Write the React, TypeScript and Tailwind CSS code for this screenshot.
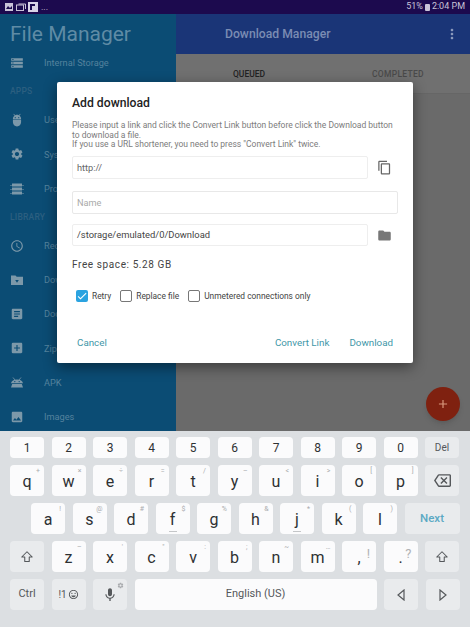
import { ReactNode } from 'react'
import {
  MdStorage,
  MdAdb,
  MdSettings,
  MdAccessTime,
  MdFolder,
  MdArticle,
  MdAddBox,
  MdImage,
  MdContentCopy,
  MdMoreVert,
  MdAdd,
  MdCheck,
  MdOutlineBackspace,
  MdMic,
  MdOutlineEmojiEmotions,
} from 'react-icons/md'
import { LuArrowBigUp } from 'react-icons/lu'

const ProcessIcon = () => (
  <svg width="14" height="14" viewBox="0 0 14 14" fill="currentColor">
    <rect x="2" y="1.5" width="10" height="3" />
    <rect x="2" y="5.5" width="10" height="3" />
    <rect x="2" y="9.5" width="10" height="3" />
    <rect x="0.5" y="3" width="1" height="1" />
    <rect x="12.5" y="3" width="1" height="1" />
    <rect x="0.5" y="7" width="1" height="1" />
    <rect x="12.5" y="7" width="1" height="1" />
    <rect x="0.5" y="11" width="1" height="1" />
    <rect x="12.5" y="11" width="1" height="1" />
  </svg>
)

const DownloadFolderIcon = () => (
  <svg width="14" height="14" viewBox="0 0 14 14">
    <path fill="currentColor" d="M1 2.5h4.5l1.2 1.2H13v8.3H1z" />
    <path fill="#0b4c74" d="M7 5v2H5.2L7 9.800 8.800 7H7z" />
  </svg>
)

const ApkIcon = () => (
  <svg width="14" height="14" viewBox="0 0 14 14" fill="currentColor">
    <path d="M1 7.200C1.300 4.800 3.800 3.400 7 3.400s5.700 1.400 6 3.800z" />
    <path d="M2.200 8h9.600l1.200 3.500H1z" />
    <path d="M3 1.500l2 2.500M11 1.500l-2 2.500" stroke="currentColor" strokeWidth="0.8" />
    <circle cx="4.800" cy="5.600" r="0.7" fill="#0b4c74" />
    <circle cx="9.200" cy="5.600" r="0.7" fill="#0b4c74" />
  </svg>
)

const Section = ({ label }: { label: string }) => (
  <div className="h-[23px] flex items-center pl-[10px] text-[8.5px] font-medium tracking-wide text-[#2b5f80]">{label}</div>
)

const DrawerItem = ({ icon, label }: { icon: ReactNode; label: string }) => (
  <div className="h-[34.2px] flex items-center text-[9.2px] text-[#54829d]">
    <div className="w-[44px] pl-[10px] text-[#7c98a9]">{icon}</div>
    <span>{label}</span>
  </div>
)

const Key = ({
  main,
  sub,
  bigSub,
  tick,
  className = '',
}: {
  main: string
  sub?: string
  bigSub?: boolean
  tick?: boolean
  className?: string
}) => (
  <div className={`relative w-[34px] h-[31px] rounded-[4px] bg-[#fbfbfc] flex items-center justify-center text-[16px] text-[#2e3133] pt-[2px] ${className}`}>
    {main}
    {sub && (
      <span className={bigSub ? 'absolute right-[6px] top-[3px] text-[13px] text-[#b0b2b5]' : 'absolute right-[4px] top-[1px] text-[7px] text-[#a9abae]'}>
        {sub}
      </span>
    )}
    {tick && <span className="absolute bottom-[2px] left-[13px] w-[8px] h-px bg-[#c4c6c8]" />}
  </div>
)

const FnKey = ({ children, className = '' }: { children: ReactNode; className?: string }) => (
  <div className={`relative w-[34px] h-[31px] rounded-[4px] bg-[#e9ebed] flex items-center justify-center text-[#55585b] ${className}`}>{children}</div>
)

const Check = ({ label, checked }: { label: string; checked?: boolean }) => (
  <div className="flex items-center gap-[4px]">
    {checked ? (
      <div className="w-[12px] h-[12px] rounded-[2px] bg-[#2ba3e0] flex items-center justify-center text-white">
        <MdCheck size={12} />
      </div>
    ) : (
      <div className="w-[12px] h-[12px] rounded-[2px] border border-[#777]" />
    )}
    <span>{label}</span>
  </div>
)

const ShiftIcon = () => <LuArrowBigUp size={18} strokeWidth={1.4} />

export default function App() {
  const numbers = ['1', '2', '3', '4', '5', '6', '7', '8', '9', '0']
  const row1 = [['q', '+'], ['w', '×'], ['e', '÷'], ['r', '='], ['t', '/'], ['y', '–'], ['u', '<'], ['i', '>'], ['o', '['], ['p', ']']]
  const row2 = [['a', '!'], ['s', '@'], ['d', '#'], ['f', '$'], ['g', '%'], ['h', '&'], ['j', '*'], ['k', '('], ['l', ')']]
  const row3 = [['z', '–'], ['x', "'"], ['c', '"'], ['v', ':'], ['b', ';'], ['n', '~'], ['m', '…']]

  return (
    <div className="relative w-[470px] h-[627px] overflow-hidden flex flex-col font-['Roboto',sans-serif] bg-[#dcdfe2]">
      {/* Status bar */}
      <div className="h-[14px] bg-[#1c0a4e] flex items-center justify-between pl-[5px] pr-[5px] text-[9px] text-[#c9c3d8]">
        <div className="flex items-center">
          <svg width="8" height="8" viewBox="0 0 8 8">
            <rect width="8" height="8" fill="#c9c3d8" />
            <path d="M1 6l2-3 2 2 2-2v3z" fill="#1c0a4e" />
          </svg>
          <svg width="10" height="8" viewBox="0 0 10 8" className="ml-[3px]" fill="none" stroke="#c9c3d8" strokeWidth="1">
            <rect x="0.500" y="2" width="7" height="5.500" />
            <path d="M2.500 1h7v5" />
          </svg>
          <svg width="10" height="10" viewBox="0 0 10 10" className="ml-[2px]">
            <rect width="10" height="10" fill="#d8d3e6" />
            <path d="M2 8V2h5v2H4v4z" fill="#1c0a4e" />
          </svg>
          <span className="ml-[3px] leading-none">...</span>
        </div>
        <div className="flex items-center gap-[2px]">
          <span>51%</span>
          <div className="w-[5px] h-[7px] bg-[#c9c3d8] rounded-[1px]" />
          <span>2:04 PM</span>
        </div>
      </div>

      {/* App behind the dialog */}
      <div className="h-[417px] flex">
        <div className="w-[176px] overflow-hidden bg-[#0b4c74]">
          <div className="h-[32px] pt-[10px] flex items-center pl-[10px] text-[21px] text-[#5f8ba5]">File Manager</div>
          <DrawerItem icon={<MdStorage size={14} />} label="Internal Storage" />
          <Section label="APPS" />
          <DrawerItem icon={<MdAdb size={14} />} label="User apps" />
          <DrawerItem icon={<MdSettings size={14} />} label="System apps" />
          <DrawerItem icon={<ProcessIcon />} label="Processes" />
          <Section label="LIBRARY" />
          <DrawerItem icon={<MdAccessTime size={14} />} label="Recent" />
          <DrawerItem icon={<DownloadFolderIcon />} label="Downloads" />
          <DrawerItem icon={<MdArticle size={14} />} label="Documents" />
          <DrawerItem icon={<MdAddBox size={14} />} label="Zip" />
          <DrawerItem icon={<ApkIcon />} label="APK" />
          <DrawerItem icon={<MdImage size={14} />} label="Images" />
        </div>
        <div className="flex-1 flex flex-col bg-[#6a6a6a]">
          <div className="h-[40px] bg-[#1a3577] flex items-center justify-between pl-[49px] pr-[10px] text-[12.2px] font-medium text-[#7b8cb3]">
            <span>Download Manager</span>
            <MdMoreVert size={16} className="text-[#8c9bbd]" />
          </div>
          <div className="h-[40px] bg-[#707070] flex text-[8.5px] font-medium border-b border-[#666]">
            <div className="w-[147px] pt-[14px] pl-[57px] text-[#222]">QUEUED</div>
            <div className="pt-[14px] pl-[49px] tracking-[0.3px] text-[#4a4a4a]">COMPLETED</div>
          </div>
        </div>
      </div>

      {/* Floating action button */}
      <div className="absolute left-[426px] top-[387px] w-[34px] h-[34px] rounded-full bg-[#7f2110] flex items-center justify-center text-[#d99a7e] shadow-md">
        <MdAdd size={14} />
      </div>

      {/* Dialog */}
      <div className="absolute left-[57px] top-[82px] w-[356px] h-[281px] bg-white rounded-[2px] shadow-[0_4px_14px_rgba(0,0,0,0.45)] px-[15px] pt-[13px]">
        <h2 className="text-[12.2px] font-medium leading-[16px] text-[#222]">Add download</h2>
        <p className="mt-[10px] whitespace-nowrap text-[8.5px] leading-[9.7px] text-[#7c7c7c]">
          Please input a link and click the Convert Link button before click the Download button
          <br />
          to download a file.
          <br />
          If you use a URL shortener, you need to press "Convert Link" twice.
        </p>
        <div className="mt-[6px] flex items-center">
          <div className="w-[296px] h-[23px] border border-[#eeeeee] rounded-[2px] flex items-center px-[4px] text-[9.2px] text-[#666]">http://</div>
          <MdContentCopy size={15} className="ml-[9px] text-[#666]" />
        </div>
        <div className="mt-[12px] w-[326px] h-[23px] border border-[#e8e8e8] rounded-[2px] flex items-center px-[4px] text-[9.2px] text-[#aaa]">Name</div>
        <div className="mt-[10px] flex items-center">
          <div className="w-[296px] h-[22px] border border-[#eeeeee] rounded-[2px] flex items-center px-[4px] text-[9.4px] text-[#444]">/storage/emulated/0/Download</div>
          <MdFolder size={15} className="ml-[9px] text-[#777]" />
        </div>
        <div className="mt-[13px] text-[10px] leading-[12px] tracking-[0.6px] text-[#444]">Free space: 5.28 GB</div>
        <div className="mt-[18px] ml-[4px] flex items-center gap-[9px] text-[8.4px] text-[#444] h-[14px]">
          <Check label="Retry" checked />
          <Check label="Replace file" />
          <Check label="Unmetered connections only" />
        </div>
        <div className="mt-[33px] flex items-center justify-between px-[5px] text-[9.8px] text-[#3f97a8] leading-[14px]">
          <span>Cancel</span>
          <div className="flex gap-[20px]">
            <span>Convert Link</span>
            <span>Download</span>
          </div>
        </div>
      </div>

      {/* Keyboard */}
      <div className="flex-1 px-[10px] pt-[6px] flex flex-col gap-[7px]">
        <div className="flex gap-[7.5px]">
          {numbers.map(n => (
            <Key key={n} main={n} className="!h-[21px] !text-[12px] !pt-0" />
          ))}
          <FnKey className="!h-[21px] text-[10px]">Del</FnKey>
        </div>
        <div className="flex gap-[7.5px]">
          {row1.map(([m, s]) => (
            <Key key={m} main={m} sub={s} />
          ))}
          <FnKey>
            <MdOutlineBackspace size={17} />
          </FnKey>
        </div>
        <div className="flex gap-[7.5px] pl-[21px]">
          {row2.map(([m, s]) => (
            <Key key={m} main={m} sub={s} tick={m === 'f' || m === 'j'} />
          ))}
          <FnKey className="!w-[55px] text-[11.5px] font-medium !text-[#5ba9c4]">Next</FnKey>
        </div>
        <div className="flex gap-[7.5px]">
          <FnKey>
            <ShiftIcon />
          </FnKey>
          {row3.map(([m, s]) => (
            <Key key={m} main={m} sub={s} />
          ))}
          <Key main="," sub="!" bigSub />
          <Key main="." sub="?" bigSub />
          <FnKey>
            <ShiftIcon />
          </FnKey>
        </div>
        <div className="flex gap-[7.5px]">
          <FnKey className="text-[11px]">Ctrl</FnKey>
          <FnKey className="text-[10px] gap-px">
            !1
            <MdOutlineEmojiEmotions size={11} />
          </FnKey>
          <FnKey>
            <MdMic size={16} />
            <MdSettings size={7} className="absolute right-[3px] top-[3px] text-[#a9abae]" />
          </FnKey>
          <div className="w-[242px] h-[31px] rounded-[4px] bg-[#fbfbfc] flex items-center justify-center text-[11px] text-[#55585b]">English (US)</div>
          <FnKey>
            <svg width="10" height="12" viewBox="0 0 10 12" fill="none" stroke="currentColor" strokeWidth="1.2"><path d="M8 1v10L2 6z" /></svg>
          </FnKey>
          <FnKey>
            <svg width="10" height="12" viewBox="0 0 10 12" fill="none" stroke="currentColor" strokeWidth="1.2"><path d="M2 1v10l6-5z" /></svg>
          </FnKey>
        </div>
      </div>
    </div>
  )
}
